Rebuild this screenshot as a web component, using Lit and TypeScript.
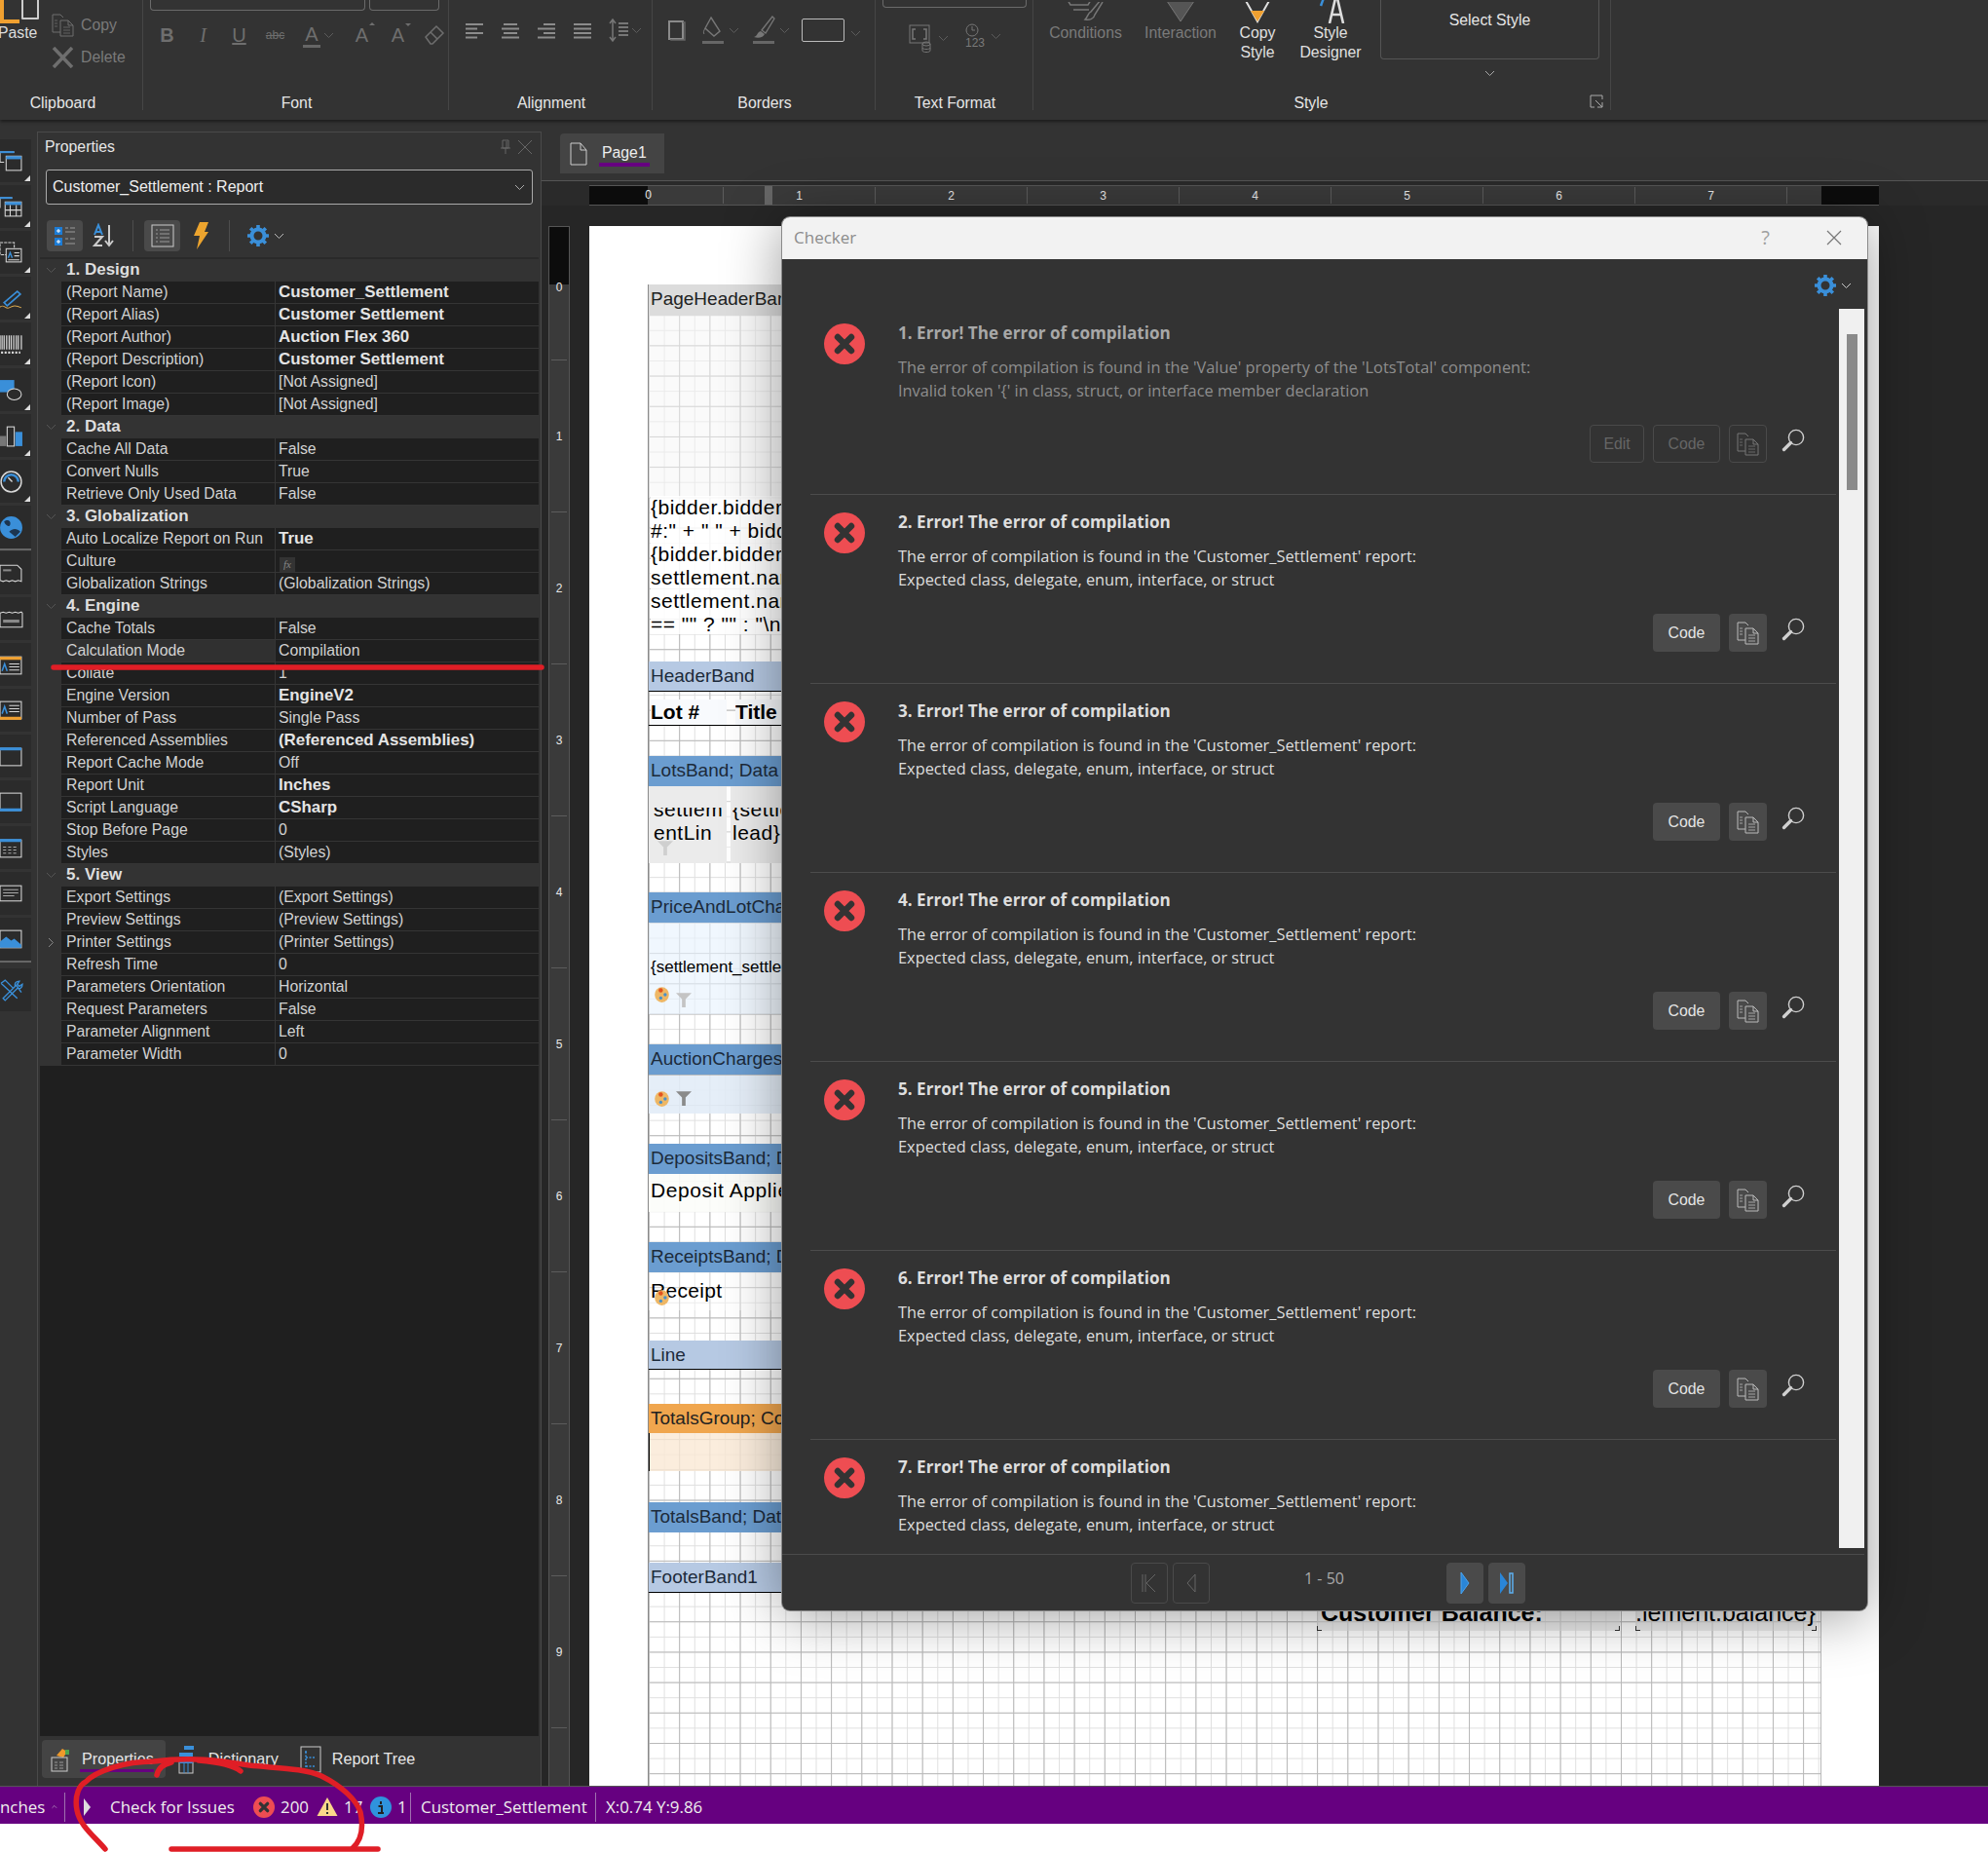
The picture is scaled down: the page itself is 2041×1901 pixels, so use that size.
import { LitElement, html, svg, css } from 'lit';
import { customElement } from 'lit/decorators.js';

// Small icon helpers
const chev = (c = '#888') => html`<svg class="chev" width="11" height="7" viewBox="0 0 11 7"><path d="M1 1l4.5 4.5L10 1" fill="none" stroke=${c}/></svg>`;

const gear = (size = 24) => html`<svg width=${size} height=${size} viewBox="0 0 24 24"><circle cx="12" cy="12" r="6.5" fill="none" stroke="#3a8fd9" stroke-width="4"/><path d="M12 1v4M12 19v4M1 12h4M19 12h4M4.2 4.2L7 7M17 17l2.8 2.8M4.2 19.8L7 17M17 7l2.8-2.8" stroke="#3a8fd9" stroke-width="3.6"/></svg>`;

const copyDoc = (c = '#aaa') => html`<svg width="23" height="24" viewBox="0 0 23 24" fill="none" stroke=${c}><path d="M9 19H1V1h8l3 3"/><path d="M9 7h8l5 5v11H9zM17 7v5h5"/><path d="M3 7h3M3 10h3M3 13h3M12 14h7M12 17h7M12 20h7" opacity=".8"/></svg>`;

const magnifier = html`<svg width="24" height="24" viewBox="0 0 24 24"><circle cx="15" cy="9" r="7.6" fill="none" stroke="#d0d0d0" stroke-width="1.4"/><path d="M9.5 14.5L2.5 21.5" stroke="#d0d0d0" stroke-width="3.4" stroke-linecap="round"/></svg>`;

const errorIcon = (d: number) => html`<svg width=${d} height=${d} viewBox="0 0 42 42"><circle cx="21" cy="21" r="21" fill="#ee4d52"/><path d="M14 14l14 14M28 14L14 28" stroke="#333" stroke-width="6.4" stroke-linecap="round"/></svg>`;

// Left toolbox glyphs, in order from the top
const B = '#3a8fd9', W = '#d8d8d8', O = '#f0a030';
const toolIcons = [
  svg`<path d="M1 3h14M1 3v10h4" fill="none" stroke=${W}/><path d="M1 2h14v2H1z" fill=${B}/><rect x="7" y="7" width="15" height="14" fill="#2b2b2b" stroke=${W}/><path d="M7 7h15v3H7z" fill=${B}/>`,
  svg`<path d="M1 3h12M1 3v10" fill="none" stroke=${W}/><path d="M1 2h12v2H1z" fill=${B}/><rect x="6" y="7" width="16" height="14" fill="#2b2b2b" stroke=${W}/><path d="M6 7h16v3H6z" fill=${B}/><path d="M6 15h16M11 10v11M17 10v11" stroke=${W}/>`,
  svg`<rect x="1" y="2" width="14" height="12" fill="none" stroke=${W} stroke-dasharray="3 1"/><rect x="7" y="8" width="15" height="13" fill="#2b2b2b" stroke=${W}/><path d="M9 17l2-5 2 5" fill="none" stroke=${B} stroke-width="1.4"/><path d="M15 12h5M15 15h5M9 19h11" stroke=${W}/>`,
  svg`<path d="M5 16L18 5l3 2.6L8 19z" fill="none" stroke=${B} stroke-width="1.6"/><path d="M0 21c5-5 6 2 10 0s6-3 12 0" fill="none" stroke="#d8a850"/>`,
  svg`<path d="M1 3v14M3 3v14M5 3v14M7.5 3v14M10 3v14M12 3v14M14.5 3v14M17 3v14M19 3v14M22 3v14" stroke=${W} stroke-width="1.2"/><path d="M2 20h19" stroke=${W} stroke-dasharray="2 1.5" stroke-width="2"/>`,
  svg`<rect x="0" y="2" width="15" height="12" fill=${B}/><ellipse cx="15" cy="16" rx="7" ry="5.5" fill="#2b2b2b" stroke=${W}/>`,
  svg`<rect x="0" y="12" width="7" height="10" fill="#777"/><rect x="8" y="3" width="7" height="19" fill="none" stroke=${W}/><rect x="16" y="8" width="7" height="14" fill=${B}/>`,
  svg`<circle cx="12" cy="12" r="10" fill="none" stroke=${W} stroke-width="1.4"/><path d="M5 12a7 7 0 0 1 14 0" fill="none" stroke=${B} stroke-width="2.4"/><path d="M9 8l4 4" stroke=${W} stroke-width="1.4"/>`,
  svg`<circle cx="12" cy="12" r="11" fill=${B}/><path d="M5 6c4-3 7 0 6 3s-5 1-6-3zM10 16c4-4 8-3 11 0l-5 5z" fill="#1c3550"/>`,
  svg`<path d="M1 4h17l4 4v12l-3-1-3 1-3-1-3 1-3-1-3 1-3-1z" fill="none" stroke=${W}/><path d="M4 9h8" stroke="#888" stroke-width="2"/>`,
  svg`<path d="M1 6l3-1 3 1 3-1 3 1 3-1 3 1 3-1 1 1v14H1z" fill="none" stroke=${W}/><path d="M4 14h16" stroke="#888" stroke-width="3"/>`,
  svg`<rect x="1" y="4" width="21" height="17" fill="none" stroke=${W}/><path d="M1 4h21v3H1z" fill=${O}/><path d="M3 18l2.5-7L8 18" fill="none" stroke=${B} stroke-width="1.5"/><path d="M10 11h10M10 14h10M10 17h10" stroke=${W}/>`,
  svg`<rect x="1" y="3" width="21" height="17" fill="none" stroke=${W}/><path d="M1 18h21v3H1z" fill=${O}/><path d="M3 15l2.5-7L8 15" fill="none" stroke=${B} stroke-width="1.5"/><path d="M10 7h10M10 10h10M10 13h10" stroke=${W}/>`,
  svg`<rect x="1" y="4" width="21" height="17" fill="none" stroke=${W}/><path d="M1 3h21v3H1z" fill=${B}/>`,
  svg`<rect x="1" y="3" width="21" height="17" fill="none" stroke=${W}/><path d="M1 18h21v3H1z" fill=${B}/>`,
  svg`<rect x="1" y="4" width="21" height="17" fill="none" stroke=${W}/><path d="M1 3h21v3H1z" fill=${B}/><path d="M4 11h3M9 11h3M14 11h3M4 14h3M9 14h3M14 14h3M4 17h3M9 17h3M14 17h3" stroke="#aaa"/>`,
  svg`<rect x="1" y="4" width="21" height="15" fill="none" stroke=${W}/><path d="M4 8h15M4 11h15M4 14h11" stroke="#aaa"/>`,
  svg`<rect x="1" y="3" width="21" height="17" fill="none" stroke=${W}/><path d="M1 20v-6l6-5 5 4 3-2 7 6v3z" fill=${B}/>`,
  svg`<path d="M2 5l4-3 8 8 3-3 5 7M2 5l16 15M20 3c-3 0-5 2-4 5L4 20l2 2L18 10c3 1 5-1 5-4l-3 2-2-2z" fill="none" stroke=${B} stroke-width="1.3"/>`,
];
const cornered = [0, 1, 2, 3, 4, 5, 6, 7];

// Paragraph alignment icons: [x, width] of each of the 4 lines
const alignLines: [number, number][][] = [
  [[1, 18], [1, 12], [1, 18], [1, 12]],
  [[3, 14], [1, 18], [3, 14], [1, 18]],
  [[7, 12], [1, 18], [7, 12], [1, 18]],
  [[1, 18], [1, 18], [1, 18], [1, 18]],
];

// Properties grid
type Row = [string, string, boolean?];
const groups: { title: string; rows: Row[] }[] = [
  { title: '1. Design', rows: [
    ['(Report Name)', 'Customer_Settlement', true],
    ['(Report Alias)', 'Customer Settlement', true],
    ['(Report Author)', 'Auction Flex 360', true],
    ['(Report Description)', 'Customer Settlement', true],
    ['(Report Icon)', '[Not Assigned]'],
    ['(Report Image)', '[Not Assigned]'],
  ] },
  { title: '2. Data', rows: [
    ['Cache All Data', 'False'],
    ['Convert Nulls', 'True'],
    ['Retrieve Only Used Data', 'False'],
  ] },
  { title: '3. Globalization', rows: [
    ['Auto Localize Report on Run', 'True', true],
    ['Culture', 'fx'],
    ['Globalization Strings', '(Globalization Strings)'],
  ] },
  { title: '4. Engine', rows: [
    ['Cache Totals', 'False'],
    ['Calculation Mode', 'Compilation'],
    ['Collate', '1'],
    ['Engine Version', 'EngineV2', true],
    ['Number of Pass', 'Single Pass'],
    ['Referenced Assemblies', '(Referenced Assemblies)', true],
    ['Report Cache Mode', 'Off'],
    ['Report Unit', 'Inches', true],
    ['Script Language', 'CSharp', true],
    ['Stop Before Page', '0'],
    ['Styles', '(Styles)'],
  ] },
  { title: '5. View', rows: [
    ['Export Settings', '(Export Settings)'],
    ['Preview Settings', '(Preview Settings)'],
    ['Printer Settings', '(Printer Settings)'],
    ['Refresh Time', '0'],
    ['Parameters Orientation', 'Horizontal'],
    ['Request Parameters', 'False'],
    ['Parameter Alignment', 'Left'],
    ['Parameter Width', '0'],
  ] },
];

// Report canvas: y values are page coordinates
const ORIGIN = 291;
const bands: [number, number, string, string][] = [
  [291, 32, 'grey', 'PageHeaderBand'],
  [678, 31, 'light', 'HeaderBand'],
  [775, 31, 'blue', 'LotsBand; Data Source'],
  [915, 31, 'blue', 'PriceAndLotCharges'],
  [1071, 31, 'blue', 'AuctionChargesBand'],
  [1173, 31, 'blue', 'DepositsBand; Data'],
  [1274, 31, 'blue', 'ReceiptsBand; Data'],
  [1375, 30, 'light', 'Line'],
  [1440, 30, 'orange', 'TotalsGroup; Condition'],
  [1541, 31, 'blue', 'TotalsBand; Data'],
  [1603, 31, 'light', 'FooterBand1'],
];
const fills: [number, number, string][] = [
  [323, 187, 'f-pale'],
  [806, 79, 'f-white'],
  [946, 94, 'f-sky'],
  [1103, 39, 'f-sky2'],
  [1204, 39, 'f-mint'],
  [1305, 39, 'f-white'],
  [1470, 39, 'f-peach'],
];
// Little markers that sit on report components: x, y inside the canvas
const marks: [number, number, string][] = [
  [9, 569, 'f1'],
  [5, 720, 'p'], [28, 725, 'f2'],
  [5, 827, 'p'], [28, 826, 'f3'],
  [5, 1031, 'p'],
];

@customElement('app-root')
export class AppRoot extends LitElement {
  static styles = css`
    :host {
      display: block;
      position: relative;
      width: 2041px;
      height: 1901px;
      background: #fff;
      overflow: hidden;
      font-family: 'Liberation Sans', Arial, sans-serif;
      color: #ddd;
    }
    .app { display: flex; flex-direction: column; height: 1872px; background: #333; }

    /* Ribbon */
    .ribbon { display: flex; height: 123px; flex: none; overflow: hidden; box-shadow: 0 2px 3px rgba(0,0,0,.45); position: relative; z-index: 2; background: #333; font-size: 15.8px; }
    .group { display: flex; flex-direction: column; border-right: 1px solid #464646; height: 113px; flex: none; box-sizing: border-box; }
    .g-clip { width: 147px; } .g-font { width: 314px; } .g-align { width: 209px; }
    .g-border { width: 229px; } .g-format { width: 162px; } .g-style { width: 593px; }
    .g-body { height: 96px; display: flex; flex: none; }
    .g-label { flex: 1; text-align: center; line-height: 20px; color: #e6e6e6; position: relative; padding-left: 2px; }
    .g-clip .g-label { padding: 0 17px 0 0; }
    .g-style .g-label { padding-right: 24px; }
    .launcher { position: absolute; right: 7px; top: 1px; }
    .col { display: flex; flex-direction: column; }
    .muted { color: #7a7a7a; }
    .paste { width: 50px; margin-left: -2px; }
    .paste-icon { display: flex; gap: 2px; height: 24px; margin-left: 2px; align-items: flex-end; }
    .paste-l { width: 20px; height: 34px; border-left: 4px solid #f0a030; border-bottom: 4px solid #f0a030; box-sizing: border-box; }
    .paste-r { width: 18px; height: 34px; border: 2px solid #ccc; box-sizing: border-box; border-radius: 1px; margin-bottom: 4px; }
    .paste-text { line-height: 20px; color: #ddd; }
    .small-col { padding: 14px 0 0 5px; gap: 10px; }
    .small { display: flex; align-items: center; gap: 7px; height: 23px; }
    .inputs { display: flex; gap: 4px; height: 11px; margin: 0 0 0 7px; }
    .fake-in { border: 1px solid #6a6a6a; border-top: none; border-radius: 0 0 4px 4px; box-sizing: border-box; height: 11px; }
    .w221 { width: 221px; } .w72 { width: 72px; } .w148 { width: 148px; margin-left: 7px; height: 8px; flex: none; }
    .stack { flex-direction: column; }
    .btns { display: flex; align-items: flex-start; }
    .cell { width: 37px; height: 32px; flex: none; display: flex; align-items: center; justify-content: center; color: #6e6e6e; font-size: 20px; position: relative; gap: 3px; }
    .wide { width: 52px; }
    .f-row { margin: 9px 0 0 6px; }
    .a-row { padding: 15px 0 0 7px; box-sizing: border-box; }
    .abc { font-size: 12px; text-decoration: line-through; }
    .und { text-decoration: underline; }
    .it { font-family: 'Liberation Serif', serif; font-style: italic; }
    .bar-a { border-bottom: 3px solid #666; line-height: 22px; padding: 0 2px; }
    .up::after, .down::after { content: ''; position: absolute; right: 5px; border: 3.5px solid transparent; }
    .up::after { border-bottom-color: #6e6e6e; top: 0; }
    .down::after { border-top-color: #6e6e6e; top: 4px; }
    .b-row { padding: 15px 0 0 6px; box-sizing: border-box; }
    .swatch { width: 44px; height: 24px; border: 1px solid #bbb; border-radius: 2px; box-sizing: border-box; margin: 4px 6px 0 6px; flex: none; }
    .b-chev { padding-top: 9px; }
    .tf-row { margin: 16px 0 0 34px; gap: 8px; }
    .tf { display: flex; align-items: center; gap: 6px; width: 50px; }
    .clock { font-size: 12px; line-height: 12px; }
    .s-col { align-items: center; line-height: 20px; text-align: center; }
    .s-icon { height: 24px; display: flex; align-items: flex-end; justify-content: center; }
    .s1 { width: 75px; margin-left: 16px; } .s2 { width: 76px; margin-left: 22px; }
    .s3 { width: 42px; margin-left: 20px; color: #e0e0e0; } .s4 { width: 72px; margin-left: 18px; color: #e0e0e0; }
    .select { margin-left: 15px; width: 225px; }
    .select-box { height: 61px; box-sizing: border-box; border: 1px solid #555; border-top: none; border-radius: 0 0 4px 4px; padding-top: 11px; text-align: center; color: #e6e6e6; line-height: 20px; }
    .select-chev { text-align: center; padding-top: 4px; }

    /* Main area */
    .main { flex: 1; display: flex; min-height: 0; }

    .tools { width: 38px; flex: none; padding-top: 20px; box-sizing: border-box; }
    .tool { width: 32px; height: 44px; margin-bottom: 3px; background: #2b2b2b; display: flex; align-items: center; position: relative; overflow: hidden; }
    .tool svg { margin-left: -1px; }
    .tool.sep { box-shadow: 0 2px 0 #666; }
    .tool.last { margin-bottom: 8px; box-shadow: 0 2px 0 #666; }
    .tool.corner::after { content: ''; position: absolute; right: 1px; bottom: 1px; border: 3.5px solid transparent; border-right-color: #ddd; border-bottom-color: #ddd; }

    .panel { width: 518px; flex: none; box-sizing: border-box; margin-top: 12px; border: 1px solid #4a4a4a; border-bottom: none; display: flex; flex-direction: column; padding: 0 2px; background: #333; }
    .p-head { height: 30px; display: flex; align-items: center; padding-left: 5px; font-size: 15.8px; color: #e6e6e6; flex: none; }
    .p-head span { flex: 1; }
    .p-head svg { margin-right: 6px; }
    .combo { flex: none; height: 36px; margin: 8px 6px 0 6px; box-sizing: border-box; border: 1px solid #aaa; border-radius: 3px; background: #2b2b2b; display: flex; align-items: center; justify-content: space-between; padding: 0 7px 0 6px; font-size: 16px; color: #eee; }
    .p-tools { flex: none; height: 38px; margin-top: 16px; display: flex; align-items: flex-start; padding-left: 7px; border-bottom: 2px solid #2a2a2a; }
    .pt { width: 37px; height: 32px; border-radius: 4px; display: flex; align-items: center; justify-content: center; flex: none; }
    .pt.on { background: #4a4a4a; }
    .pt.shift { margin-left: 3px; }
    .pt-sep { width: 1px; height: 32px; background: #4d4d4d; margin: 0 11px; }
    .pt-gap { width: 2px; }
    .pt-gear { display: flex; align-items: center; gap: 4px; margin: 4px 0 0 6px; }
    .grid { flex: 1; background: #1f1f1f; display: block; min-height: 0; }
    .row { display: grid; grid-template-columns: 22px 219px 1fr; height: 23px; font-size: 15.8px; line-height: 22px; }
    .gut { background: #333; display: flex; align-items: center; justify-content: center; }
    .name, .val { border-bottom: 1px solid #353535; box-sizing: border-box; padding-left: 5px; color: #d2d2d2; white-space: nowrap; overflow: hidden; }
    .val { border-left: 1px solid #353535; padding-left: 3px; }
    .val.b { font-weight: bold; color: #e4e4e4; font-size: 16.9px; }
    .name.active { background: #303030; }
    .ghead { background: #333; grid-column: 2 / 4; font-weight: bold; color: #dedede; padding-left: 5px; font-size: 17px; }
    .fx { display: inline-block; width: 16px; height: 16px; line-height: 15px; background: #333; color: #888; font-family: 'Liberation Serif', serif; font-style: italic; font-size: 11px; text-align: center; vertical-align: -2px; margin-left: 1px; }
    .p-tabs { flex: none; height: 47px; display: flex; align-items: flex-start; padding: 4px 0 0 2px; font-size: 16.2px; color: #e6e6e6; }
    .ptab { height: 39px; display: flex; align-items: center; gap: 14px; padding: 0 11px 0 12px; border-radius: 4px; position: relative; }
    .ptab.on { background: #444; gap: 12px; padding: 0 12px 0 7px; }
    .ptab.on::after { content: ''; position: absolute; left: 39px; right: 12px; bottom: 6px; height: 3px; background: #660080; }
    .ptab.tree { gap: 11px; padding-left: 11px; }

    /* Designer */
    .center { flex: 1; min-width: 0; display: flex; flex-direction: column; background: #333; }
    .tabs { height: 63px; flex: none; box-sizing: border-box; padding: 14px 0 0 19px; border-bottom: 1px solid #555; }
    .tab { width: 107px; height: 41px; box-sizing: border-box; background: #444; border-radius: 4px 0 0 0; display: flex; align-items: center; gap: 12px; padding-left: 10px; font-size: 15.8px; color: #eee; }
    .tab span { border-bottom: 4px solid #660080; line-height: 17px; padding: 1px 3px 2px; margin-top: 2px; }
    .hruler-row { height: 25px; flex: none; box-sizing: border-box; padding: 4px 0 0 49px; background: #2a2a2a; }
    .hruler { display: flex; width: 1324px; height: 21px; box-sizing: border-box; background: #3a3a3a; border-top: 1px solid #555; border-bottom: 1px solid #555; position: relative; font-size: 12px; color: #e8e8e8; }
    .r-black { width: 60px; background: #0c0c0c; flex: none; position: relative; }
    .r-zero { position: absolute; right: -4px; top: 2px; }
    .r-black.end { width: 59px; margin-left: auto; }
    .rc { flex: none; display: flex; align-items: center; justify-content: center; box-sizing: border-box; width: 156px; border-right: 1px solid #5c5c5c; margin: 1px 0; }
    .rc.first { width: 78px; }
    .r-mark { position: absolute; left: 180px; top: 0; bottom: 0; width: 8px; background: #666; }
    .work { flex: 1; min-height: 0; display: flex; background: #262626; align-items: stretch; }
    .vruler { width: 22px; flex: none; margin: 21px 20px 0 7px; background: #3a3a3a; border: 1px solid #555; border-bottom: none; box-sizing: border-box; display: flex; flex-direction: column; font-size: 12px; color: #e8e8e8; overflow: hidden; }
    .v-black { height: 59px; background: #0c0c0c; flex: none; }
    .vc { flex: none; height: 156px; box-sizing: border-box; border-bottom: 1px solid #5c5c5c; display: flex; align-items: center; justify-content: center; margin: 0 2px; }
    .vc.first { height: 78px; align-items: flex-start; }
    .vc.first span { margin-top: -4px; }
    .page { width: 1324px; flex: none; margin-top: 21px; background: #fff; padding: 60px 59px 0 60px; box-sizing: border-box; }
    .canvas {
      position: relative;
      height: 100%;
      border-left: 1px solid #8a8a8a;
      box-sizing: border-box;
      background-image:
        linear-gradient(to right, #b8b8b8 1px, transparent 1px),
        linear-gradient(to bottom, #b8b8b8 1px, transparent 1px),
        linear-gradient(to right, #dfdfdf 1px, transparent 1px),
        linear-gradient(to bottom, #dfdfdf 1px, transparent 1px);
      background-size: 31.2px 31.2px, 31.2px 31.2px, 15.6px 15.6px, 15.6px 15.6px;
      font-size: 19px;
      color: #111;
      border-right: 1px solid #b8b8b8;
    }
    .band { position: absolute; left: 0; right: 0; line-height: 30px; padding-left: 2px; box-sizing: border-box; color: #1c2a3a; overflow: hidden; }
    .band span { display: block; width: 135px; overflow: hidden; white-space: nowrap; }
    .grey { background: #dcdcdc; color: #222; }
    .light { background: #b6c9e3; border-bottom: 1px solid #000; }
    .blue { background: #6b9dd0; }
    .orange { background: #f0a64e; color: #222; }
    .fill { position: absolute; left: 0; right: 0; }
    .f-pale { background: rgba(245,245,245,.5); }
    .f-white { background: rgba(255,255,255,.4); }
    .f-sky { background: rgba(232,243,253,.65); }
    .f-sky2 { background: rgba(226,236,247,.9); }
    .f-mint { background: rgba(252,253,250,.9); }
    .f-peach { background: rgba(250,232,212,.8); border-left: 1px solid #000; }
    .txt { position: absolute; white-space: nowrap; overflow: hidden; color: #000; }
    .expr { left: 2px; top: 217px; width: 136px; font-size: 21px; letter-spacing: .5px; line-height: 24px; height: 142px; background: rgba(255,255,255,.85); }
    .lotrow { left: 0; right: 0; top: 427px; height: 25px; border-bottom: 1px solid #000; }
    .lot { position: absolute; top: 426px; height: 26px; line-height: 25px; font-size: 21px; font-weight: bold; color: #000; background: #f8fafd; }
    .lot1 { left: 2px; width: 78px; } .lot2 { left: 89px; width: 49px; overflow: hidden; }
    .cellbox { position: absolute; top: 515px; height: 79px; background: #ebebeb; font-size: 21px; letter-spacing: .5px; line-height: 24px; color: #000; padding: 22px 0 0 5px; box-sizing: border-box; }
    .c1 { left: 0; width: 80px; } .c2 { left: 84px; width: 54px; padding-left: 2px; }
    .cliptext { height: 51px; overflow: hidden; }
    .cliptext div:first-child { margin-top: -10px; }
    .settle { left: 2px; top: 691px; width: 136px; font-size: 17px; line-height: 20px; }
    .deposit { left: 2px; top: 917px; width: 136px; font-size: 21px; letter-spacing: .6px; line-height: 26px; }
    .receipt { left: 2px; top: 1020px; width: 136px; font-size: 21px; letter-spacing: .3px; line-height: 26px; }
    .mini { position: absolute; }
    .balbox { position: absolute; top: 1349px; height: 33px; background: rgba(225,225,225,.6); }
    .balbox::before, .balbox::after { content: ''; position: absolute; bottom: 0; width: 4px; height: 4px; border-bottom: 1px solid #333; }
    .balbox::before { left: 0; border-left: 1px solid #333; }
    .balbox::after { right: 0; border-right: 1px solid #333; }
    .b1 { left: 686px; width: 311px; } .b2 { left: 1013px; width: 186px; }
    .balance { position: absolute; left: 690px; top: 1350px; font-size: 25px; font-weight: bold; line-height: 26px; color: #000; white-space: nowrap; }
    .balance2 { position: absolute; left: 1013px; top: 1350px; font-size: 25px; line-height: 26px; color: #000; white-space: nowrap; }

    /* Status bar */
    .status { height: 39px; flex: none; background: #660080; display: flex; align-items: center; padding-top: 3px; font-family: 'Open Sans', sans-serif; font-size: 16.9px; color: #eee; white-space: nowrap; border-top: 1px solid #555; box-sizing: border-box; position: relative; z-index: 3; }
    .st-inch { width: 67px; box-sizing: border-box; display: flex; align-items: center; justify-content: flex-end; gap: 7px; padding-right: 7px; height: 30px; border-right: 1px solid #a070b0; }
    .play { width: 0; height: 0; margin-left: 19px; border-left: 7px solid #ddd; border-top: 9px solid transparent; border-bottom: 9px solid transparent; }
    .st-check { margin-left: 20px; width: 147px; }
    .st-num { display: flex; align-items: center; gap: 6px; }
    .st-err { width: 65px; } .st-warn { width: 55px; } .st-info { width: 41px; }
    .st-div { height: 30px; border-left: 1px solid #a070b0; padding-left: 10px; line-height: 30px; }
    .st-name { width: 179px; }

    /* Checker dialog */
    .modal { position: absolute; left: 803px; top: 223px; width: 1114px; height: 1430px; background: #333; border-radius: 8px; box-shadow: 0 0 0 1px #8a8a8a, 0 4px 60px rgba(0,0,0,.4); display: flex; flex-direction: column; font-family: 'Open Sans', sans-serif; overflow: hidden; z-index: 1; }
    .m-title { height: 43px; flex: none; background: #f2f2f2; display: flex; align-items: center; padding: 0 26px 2px 12px; box-sizing: border-box; font-size: 17px; color: #8c8c8c; }
    .m-title span:first-child { flex: 1; }
    .m-q { font-size: 20px; color: #a0a0a0; margin-right: 58px; }
    .m-bar { height: 48px; flex: none; display: flex; justify-content: flex-end; align-items: center; gap: 4px; padding: 6px 16px 0 0; box-sizing: border-box; }
    .m-body { flex: 1; min-height: 0; display: flex; padding-left: 29px; }
    .list { width: 1053px; flex: none; overflow: hidden; }
    .item { height: 194px; box-sizing: border-box; border-bottom: 1px solid #4c4c4c; display: grid; grid-template-columns: 90px 1fr; position: relative; }
    .e-icon { padding: 18px 0 0 14px; }
    .e-title { font-weight: 700; font-size: 17.1px; line-height: 24px; margin-top: 16px; color: #dedede; }
    .e-desc { font-size: 16.35px; line-height: 23.5px; margin-top: 12px; color: #dedede; }
    .dim .e-title { color: #a8a8a8; }
    .dim .e-desc { color: #8e8e8e; }
    .e-actions { position: absolute; right: 32px; top: 122px; display: flex; align-items: center; gap: 9px; font-family: 'Liberation Sans', sans-serif; font-size: 15.8px; }
    .act { height: 39px; box-sizing: border-box; border-radius: 4px; display: flex; align-items: center; justify-content: center; background: #4a4a4a; color: #e4e4e4; }
    .dim .act { background: transparent; border: 1px solid #4a4a4a; color: #666; }
    .a-edit { width: 56px; } .a-code { width: 69px; } .a-copy { width: 39px; }
    .search { margin: -3px 0 0 6px; }
    .scroll { width: 26px; flex: none; margin: 3px 0 0 3px; height: 1272px; background: #f0f0f0; box-sizing: border-box; padding: 26px 7px 0 8px; }
    .thumb { height: 160px; background: #8a8a8a; }
    .m-foot { height: 58px; flex: none; border-top: 1px solid #4c4c4c; margin: 0 3px 0 0; display: flex; align-items: flex-start; padding: 8px 0 0 358px; box-sizing: border-box; gap: 5px; font-size: 16px; color: #aaa; }
    .nav { width: 38px; height: 42px; box-sizing: border-box; border: 1px solid #4a4a4a; border-radius: 4px; display: flex; align-items: center; justify-content: center; }
    .nav.on { background: #4a4a4a; }
    .range { width: 233px; padding: 5px 8px 0 0; box-sizing: border-box; text-align: center; line-height: 22px; }

    .ink { position: absolute; left: 0; top: 0; z-index: 5; pointer-events: none; }
  `;

  private _row(name: string, value: string, bold?: boolean) {
    return html`<div class="row">
      <div class="gut">${name === 'Printer Settings' ? html`<svg width="7" height="11" viewBox="0 0 7 11"><path d="M1 1l4.5 4.5L1 10" fill="none" stroke="#888"/></svg>` : ''}</div>
      <div class="name ${name === 'Calculation Mode' ? 'active' : ''}">${name}</div>
      <div class="val ${bold ? 'b' : ''}">${value === 'fx' ? html`<span class="fx">fx</span>` : value}</div>
    </div>`;
  }

  private _ribbon() {
    return html`<div class="ribbon">
      <div class="group g-clip">
        <div class="g-body">
          <div class="col paste">
            <div class="paste-icon"><div class="paste-l"></div><div class="paste-r"></div></div>
            <div class="paste-text">Paste</div>
          </div>
          <div class="col small-col muted">
            <div class="small">${copyDoc('#6e6e6e')}<span>Copy</span></div>
            <div class="small"><svg width="23" height="22" viewBox="0 0 23 22"><path d="M2 1l19 20M21 1L2 21" stroke="#6e6e6e" stroke-width="3.5"/></svg><span>Delete</span></div>
          </div>
        </div>
        <div class="g-label">Clipboard</div>
      </div>
      <div class="group g-font">
        <div class="g-body stack">
          <div class="inputs"><div class="fake-in w221"></div><div class="fake-in w72"></div></div>
          <div class="btns f-row">
            <div class="cell"><b>B</b></div><div class="cell it">I</div><div class="cell und">U</div><div class="cell abc">abc</div>
            <div class="cell wide"><span class="bar-a">A</span>${chev('#5c5c5c')}</div>
            <div class="cell up">A</div><div class="cell down">A</div>
            <div class="cell"><svg width="22" height="22" viewBox="0 0 22 22"><path d="M2 13L13 2l7 7-11 11H7z" fill="none" stroke="#6e6e6e" stroke-width="1.5"/><path d="M7 8l7 7" stroke="#6e6e6e" stroke-width="1.5"/></svg></div>
          </div>
        </div>
        <div class="g-label">Font</div>
      </div>
      <div class="group g-align">
        <div class="g-body btns a-row">
          ${alignLines.map(lines => html`<div class="cell"><svg width="20" height="17" viewBox="0 0 20 17">${lines.map(([x, w], j) => svg`<rect x=${x} y=${1 + j * 4.5} width=${w} height="2" fill="#8c8c8c"/>`)}</svg></div>`)}
          <div class="cell wide"><svg width="20" height="24" viewBox="0 0 20 24"><path d="M4 1v22M1 5l3-4 3 4M1 19l3 4 3-4" fill="none" stroke="#777" stroke-width="1.5"/><path d="M10 5h10M10 9h10M10 13h10M10 17h10" stroke="#777" stroke-width="1.8"/></svg>${chev('#5c5c5c')}</div>
        </div>
        <div class="g-label">Alignment</div>
      </div>
      <div class="group g-border">
        <div class="g-body btns b-row">
          <div class="cell"><svg width="18" height="22" viewBox="0 0 18 22"><rect x="1" y="2" width="14" height="18" fill="none" stroke="#8a8a8a" stroke-width="2"/><path d="M15 3h2v18H3v-1" fill="none" stroke="#666" stroke-width="1.5"/></svg></div>
          <div class="cell wide"><svg width="26" height="30" viewBox="0 0 26 30"><path d="M11 2l9 14-6 5-9-8z" fill="none" stroke="#777" stroke-width="1.4"/><path d="M5 13c-2 3-2 5-1 6" fill="none" stroke="#777"/><rect x="2" y="26" width="22" height="3" fill="#666"/></svg>${chev('#5c5c5c')}</div>
          <div class="cell wide"><svg width="26" height="30" viewBox="0 0 26 30"><path d="M22 1L11 15l4 3L24 3z" fill="none" stroke="#777" stroke-width="1.3"/><path d="M10 16c-4 1-3 5-7 6 5 2 10 0 11-3z" fill="#777"/><rect x="2" y="26" width="22" height="3" fill="#666"/></svg>${chev('#5c5c5c')}</div>
          <div class="swatch"></div><div class="b-chev">${chev('#5c5c5c')}</div>
        </div>
        <div class="g-label">Borders</div>
      </div>
      <div class="group g-format">
        <div class="g-body stack">
          <div class="fake-in w148"></div>
          <div class="btns tf-row">
            <div class="tf"><svg width="24" height="30" viewBox="0 0 24 30" fill="none" stroke="#777"><rect x="1" y="2" width="20" height="18"/><path d="M7 6H4v10h3M15 6h3v10h-3" stroke-width="1.5"/><ellipse cx="18" cy="21" rx="4" ry="2"/><path d="M14 21v7c0 2 8 2 8 0v-7M14 25c0 2 8 2 8 0"/></svg>${chev('#5c5c5c')}</div>
            <div class="tf"><div class="col muted clock"><svg width="14" height="14" viewBox="0 0 14 14" fill="none" stroke="#777"><circle cx="7" cy="7" r="6"/><path d="M7 3v4h3"/></svg>123</div>${chev('#5c5c5c')}</div>
          </div>
        </div>
        <div class="g-label">Text Format</div>
      </div>
      <div class="group g-style">
        <div class="g-body">
          <div class="col s-col s1 muted"><div class="s-icon"><svg width="42" height="22" viewBox="0 0 42 22" fill="none" stroke="#777" stroke-width="1.5"><path d="M2-2h24l-3 5H5zM8 8h16"/><path d="M36-2L26 10c-3 1-3 5-6 8 5 1 9-1 10-5l8-13"/></svg></div><div>Conditions</div></div>
          <div class="col s-col s2 muted"><div class="s-icon"><svg width="36" height="22" viewBox="0 0 36 22"><path d="M2-4h32L18 20z" fill="#555" stroke="#777"/></svg></div><div>Interaction</div></div>
          <div class="col s-col s3"><div class="s-icon"><svg width="32" height="22" viewBox="0 0 32 22"><path d="M3-3l13 23 13-23" fill="none" stroke="#e0e0e0" stroke-width="2"/><path d="M9 9h14l-7 11z" fill="#f0a030"/></svg></div><div>Copy<br />Style</div></div>
          <div class="col s-col s4"><div class="s-icon"><svg width="40" height="24" viewBox="0 0 40 24"><path d="M10 6l3-8" stroke="#3a8fd9" stroke-width="2.5"/><path d="M19 24L26-6l7 30M22 15h9" fill="none" stroke="#ddd" stroke-width="2.6"/></svg></div><div>Style<br />Designer</div></div>
          <div class="col select"><div class="select-box">Select Style</div><div class="select-chev">${chev('#aaa')}</div></div>
        </div>
        <div class="g-label">Style<svg class="launcher" width="14" height="14" viewBox="0 0 14 14" fill="none" stroke="#aaa"><path d="M13 5V1H1v12h4M6 6l7 7M13 8v5H8"/></svg></div>
      </div>
    </div>`;
  }

  private _tools() {
    return html`<div class="tools">
      ${toolIcons.map((ic, i) => html`<div class="tool ${cornered.includes(i) ? 'corner' : ''} ${i === 8 ? 'sep' : ''} ${i === 17 ? 'last' : ''}"><svg width="25" height="25" viewBox="0 0 24 24">${ic}</svg></div>`)}
    </div>`;
  }

  private _panel() {
    return html`<div class="panel">
      <div class="p-head"><span>Properties</span>
        <svg width="12" height="16" viewBox="0 0 12 16" fill="none" stroke="#666"><path d="M3 1h6v8H3zM1 9h10M6 9v6M7 2v7"/></svg>
        <svg width="16" height="16" viewBox="0 0 16 16" stroke="#666"><path d="M1 1l14 14M15 1L1 15"/></svg>
      </div>
      <div class="combo"><span>Customer_Settlement : Report</span>${chev('#aaa')}</div>
      <div class="p-tools">
        <div class="pt on"><svg width="24" height="24" viewBox="0 0 24 24"><rect x="1" y="3" width="8" height="8" fill="#1c7cd6"/><rect x="1" y="14" width="8" height="8" fill="#1c7cd6"/><path d="M3 7h4M5 5v4M3 18h4M5 16v4" stroke="#fff"/><path d="M12 4h3M17 4h5M12 8h10M12 15h3M17 15h5M12 20h10" stroke="#999" stroke-width="1.2"/></svg></div>
        <div class="pt shift"><svg width="26" height="26" viewBox="0 0 26 26"><path d="M3 12l4-10 4 10M4.5 9h5" fill="none" stroke="#3a8fd9" stroke-width="2"/><path d="M3 14h8l-8 9h8" fill="none" stroke="#ccc" stroke-width="2"/><path d="M18 2v21M14 18l4 5 4-5" fill="none" stroke="#ccc" stroke-width="2"/></svg></div>
        <div class="pt-sep"></div>
        <div class="pt on"><svg width="24" height="26" viewBox="0 0 24 26" fill="none" stroke="#ccc"><rect x="1" y="2" width="22" height="22"/><path d="M5 7h2M9 7h10M5 11h2M9 11h10M5 15h2M9 15h10M5 19h2M9 19h10" stroke="#999"/></svg></div>
        <div class="pt-gap"></div>
        <div class="pt"><svg width="18" height="30" viewBox="0 0 18 30"><path d="M8 1h9l-4 10h4L5 29l3-14H2z" fill="#eca42e"/></svg></div>
        <div class="pt-sep"></div>
        <div class="pt-gear">${gear(24)}${chev('#bbb')}</div>
      </div>
      <div class="grid">
        ${groups.map(g => html`
          <div class="row"><div class="gut"><svg width="11" height="7" viewBox="0 0 11 7"><path d="M1 1l4.5 4.5L10 1" fill="none" stroke="#555"/></svg></div><div class="ghead">${g.title}</div></div>
          ${g.rows.map(r => this._row(r[0], r[1], r[2]))}
        `)}
      </div>
      <div class="p-tabs">
        <div class="ptab on"><svg width="22" height="26" viewBox="0 0 22 26"><path d="M8 9l6-7 5 3-4 6z" fill="#ef9a2b"/><rect x="17" y="3" width="4" height="5" fill="#4ca350"/><rect x="3" y="11" width="16" height="14" fill="none" stroke="#ccc"/><path d="M6 16h3M11 16h4M6 19h3M11 19h4M6 22h3M11 22h4" stroke="#999"/></svg><span>Properties</span></div>
        <div class="ptab"><svg width="18" height="30" viewBox="0 0 18 30"><path d="M7 1h10v4H7zM2 8h14v4H2z" fill="#3a8fd9"/><rect x="2" y="15" width="14" height="14" fill="none" stroke="#ccc"/><path d="M2 15h14v4H2z" fill="#3a8fd9"/><path d="M7 19v10M11 19v10" stroke="#3a8fd9"/></svg><span>Dictionary</span></div>
        <div class="ptab tree"><svg width="22" height="28" viewBox="0 0 22 28" fill="none" stroke="#ccc"><rect x="1" y="1" width="20" height="26"/><path d="M6 6v16M6 12h9M6 21h9M5 6h3" stroke="#3a8fd9" stroke-dasharray="2 1.5" stroke-width="1.5"/></svg><span>Report Tree</span></div>
      </div>
    </div>`;
  }

  private _canvas() {
    const expr = ['{bidder.bidderN', '#:" + " " + bidd', '{bidder.bidderN', 'settlement.nam', 'settlement.nam', '== "" ? "" : "\\n"'];
    const palette = html`<svg width="17" height="18" viewBox="0 0 14 16"><ellipse cx="7" cy="8" rx="6.5" ry="7" fill="#eeb765"/><circle cx="6" cy="4" r="2" fill="#e2531f"/><circle cx="10" cy="8" r="1.5" fill="#4a90c8"/><circle cx="6" cy="11" r="1.5" fill="#4a90c8"/></svg>`;
    const funnel = (c: string) => html`<svg width="16" height="16" viewBox="0 0 13 13"><path d="M0 1h13L8 6v7H5V6z" fill=${c}/></svg>`;
    const markIcon = (k: string) => k === 'p' ? palette : funnel(k === 'f1' ? '#cfcfcf' : k === 'f2' ? '#c4c4c4' : '#8a8a8a');
    return html`<div class="canvas">
      ${fills.map(([y, h, c]) => html`<div class="fill ${c}" style="top:${y - ORIGIN}px;height:${h}px"></div>`)}
      ${bands.map(([y, h, c, t]) => html`<div class="band ${c}" style="top:${y - ORIGIN}px;height:${h}px"><span>${t}</span></div>`)}
      <div class="txt expr">${expr.map(l => html`<div>${l}</div>`)}</div>
      <div class="txt lotrow"></div>
      <div class="lot lot1">Lot #</div><div class="lot lot2">Title</div>
      <div class="cellbox c1"><div class="cliptext"><div>settlem</div><div>entLin</div></div></div>
      <div class="cellbox c2"><div class="cliptext"><div>{settle</div><div>lead}</div></div></div>
      <div class="txt settle">{settlement_settle</div>
      <div class="txt deposit">Deposit Applie</div>
      <div class="txt receipt">Receipt</div>
      ${marks.map(([x, y, k]) => html`<div class="mini" style="left:${x}px;top:${y}px">${markIcon(k)}</div>`)}
      <div class="balbox b1"></div><div class="balbox b2"></div>
      <div class="balance">Customer Balance:</div>
      <div class="balance2">.lement.balance}</div>
    </div>`;
  }

  private _center() {
    return html`<div class="center">
      <div class="tabs"><div class="tab"><svg width="18" height="24" viewBox="0 0 18 24" fill="none" stroke="#ccc"><path d="M1 1h10l6 7v15H1zM11 1v7h6"/></svg><span>Page1</span></div></div>
      <div class="hruler-row">
        <div class="hruler">
          <div class="r-black"><span class="r-zero">0</span></div>
          <div class="rc first"></div>
          ${[1, 2, 3, 4, 5, 6, 7].map(n => html`<div class="rc">${n}</div>`)}
          <div class="r-black end"></div>
          <div class="r-mark"></div>
        </div>
      </div>
      <div class="work">
        <div class="vruler">
          <div class="v-black"></div>
          <div class="vc first"><span>0</span></div>
          ${[1, 2, 3, 4, 5, 6, 7, 8, 9].map(n => html`<div class="vc">${n}</div>`)}
        </div>
        <div class="page">${this._canvas()}</div>
      </div>
    </div>`;
  }

  private _status() {
    return html`<div class="status">
      <div class="st-inch"><span>nches</span><svg width="11" height="7" viewBox="0 0 11 7"><path d="M1 6l4.5-4.5L10 6" fill="none" stroke="#ddd"/></svg></div>
      <div class="play"></div>
      <div class="st-check">Check for Issues</div>
      <div class="st-num st-err">${errorIcon(22)}<span>200</span></div>
      <div class="st-num st-warn"><svg width="22" height="21" viewBox="0 0 22 21"><path d="M11 1l10.5 19H.5z" fill="#fbd78a"/><path d="M11 7v7M11 16v2" stroke="#333" stroke-width="2"/></svg><span>17</span></div>
      <div class="st-num st-info"><svg width="22" height="22" viewBox="0 0 22 22"><circle cx="11" cy="11" r="11" fill="#2f93dd"/><path d="M11 5v3M8.5 10H12v7M8 17h6" fill="none" stroke="#222" stroke-width="2"/></svg><span>1</span></div>
      <div class="st-div st-name">Customer_Settlement</div>
      <div class="st-div">X:0.74 Y:9.86</div>
    </div>`;
  }

  private _modal() {
    const items = [1, 2, 3, 4, 5, 6, 7];
    return html`<div class="modal">
      <div class="m-title"><span>Checker</span><span class="m-q">?</span>
        <svg width="16" height="16" viewBox="0 0 16 16" stroke="#777" stroke-width="1.2"><path d="M1 1l14 14M15 1L1 15"/></svg>
      </div>
      <div class="m-bar">${gear(24)}${chev('#ccc')}</div>
      <div class="m-body">
        <div class="list">
          ${items.map(n => html`<div class="item ${n === 1 ? 'dim' : ''}">
            <div class="e-icon">${errorIcon(42)}</div>
            <div>
              <div class="e-title">${n}. Error! The error of compilation</div>
              ${n === 1
                ? html`<div class="e-desc">The error of compilation is found in the 'Value' property of the 'LotsTotal' component:<br />Invalid token '{' in class, struct, or interface member declaration</div>`
                : html`<div class="e-desc">The error of compilation is found in the 'Customer_Settlement' report:<br />Expected class, delegate, enum, interface, or struct</div>`}
            </div>
            <div class="e-actions">
              ${n === 1 ? html`<div class="act a-edit">Edit</div>` : ''}
              <div class="act a-code">Code</div>
              <div class="act a-copy">${copyDoc(n === 1 ? '#777' : '#bbb')}</div>
              <div class="search">${magnifier}</div>
            </div>
          </div>`)}
        </div>
        <div class="scroll"><div class="thumb"></div></div>
      </div>
      <div class="m-foot">
        <div class="nav"><svg width="16" height="22" viewBox="0 0 16 22" fill="none" stroke="#666"><path d="M1 2v18M4 2v18M14 2L5 11l9 9"/></svg></div>
        <div class="nav"><svg width="10" height="22" viewBox="0 0 10 22" fill="none" stroke="#666"><path d="M9 2L1 11l8 9z"/></svg></div>
        <div class="range">1 - 50</div>
        <div class="nav on"><svg width="10" height="24" viewBox="0 0 10 24"><path d="M1 1l8 11L1 23z" fill="#2a86d8" stroke="#4aa3ee"/></svg></div>
        <div class="nav on"><svg width="16" height="24" viewBox="0 0 16 24"><path d="M1 1l8 11L1 23z" fill="#2a86d8"/><path d="M11 2h3v20h-3z" fill="none" stroke="#5db0f0" stroke-width="1.5"/></svg></div>
      </div>
    </div>`;
  }

  render() {
    return html`
      <div class="app">
        ${this._ribbon()}
        <div class="main">
          ${this._tools()}
          ${this._panel()}
          ${this._center()}
        </div>
        ${this._status()}
      </div>
      ${this._modal()}
      <!-- red pen marks drawn over the screenshot -->
      <svg class="ink" width="2041" height="1901" fill="none" stroke="#e01e26" stroke-width="5.5" stroke-linecap="round" stroke-linejoin="round">
        <path d="M55 685H556"/>
        <path d="M108 1898C96 1884 82 1874 79 1858C76 1842 82 1832 88 1829C98 1818 128 1808 158 1808C196 1803 226 1807 256 1812C284 1815 312 1815 330 1823C352 1834 366 1848 370 1860C373 1874 372 1888 362 1897"/>
        <path d="M161 1822C163 1814 168 1811 176 1809"/>
        <path d="M204 1807C226 1809 240 1812 247 1818"/>
        <path d="M176 1898H388"/>
      </svg>
    `;
  }
}
